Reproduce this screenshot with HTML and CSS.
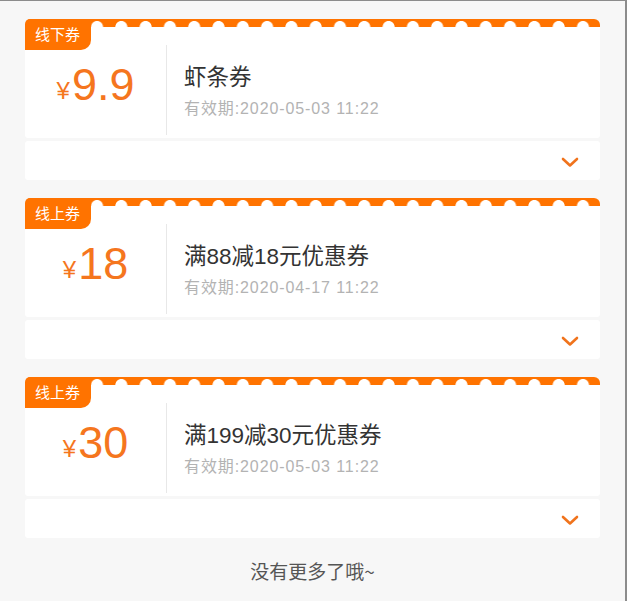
FILE: index.html
```html
<!DOCTYPE html>
<html lang="zh-CN">
<head>
    <meta charset="UTF-8">
    <meta name="viewport" content="width=device-width, initial-scale=1.0">
    <title>我的优惠券</title>
    <link rel="stylesheet" href="styles.css">
</head>
<body>
    <div class="page">
        <div class="coupon-list">
            <div class="coupon">
                <span class="coupon-tag">线下券</span>
                <div class="coupon-edge"></div>
                <div class="coupon-body">
                    <div class="coupon-price"><span class="yen">¥</span>9.9</div>
                    <div class="coupon-info">
                        <div class="coupon-title">虾条券</div>
                        <div class="coupon-date">有效期:2020-05-03 11:22</div>
                    </div>
                </div>
                <div class="coupon-foot">
                    <svg class="chevron" width="18" height="11" viewBox="0 0 18 11"><path d="M2 2 L9 8.5 L16 2" fill="none" stroke="#f0731c" stroke-width="2.6" stroke-linecap="round" stroke-linejoin="round"/></svg>
                </div>
            </div>

            <div class="coupon">
                <span class="coupon-tag">线上券</span>
                <div class="coupon-edge"></div>
                <div class="coupon-body">
                    <div class="coupon-price"><span class="yen">¥</span>18</div>
                    <div class="coupon-info">
                        <div class="coupon-title">满88减18元优惠券</div>
                        <div class="coupon-date">有效期:2020-04-17 11:22</div>
                    </div>
                </div>
                <div class="coupon-foot">
                    <svg class="chevron" width="18" height="11" viewBox="0 0 18 11"><path d="M2 2 L9 8.5 L16 2" fill="none" stroke="#f0731c" stroke-width="2.6" stroke-linecap="round" stroke-linejoin="round"/></svg>
                </div>
            </div>

            <div class="coupon">
                <span class="coupon-tag">线上券</span>
                <div class="coupon-edge"></div>
                <div class="coupon-body">
                    <div class="coupon-price"><span class="yen">¥</span>30</div>
                    <div class="coupon-info">
                        <div class="coupon-title">满199减30元优惠券</div>
                        <div class="coupon-date">有效期:2020-05-03 11:22</div>
                    </div>
                </div>
                <div class="coupon-foot">
                    <svg class="chevron" width="18" height="11" viewBox="0 0 18 11"><path d="M2 2 L9 8.5 L16 2" fill="none" stroke="#f0731c" stroke-width="2.6" stroke-linecap="round" stroke-linejoin="round"/></svg>
                </div>
            </div>
        </div>

        <p class="no-more">没有更多了哦~</p>
    </div>
</body>
</html>
```

FILE: styles.css
```css
html, body {
    margin: 0;
    padding: 0;
    height: 100%;
}

body {
    font-family: "Liberation Sans", Arial, "Noto Sans CJK SC", sans-serif;
    color: #333;
    background-color: #f7f7f7;
    overflow: hidden;
}

.page {
    box-sizing: border-box;
    height: 601px;
    border-top: 1px solid #8c8c8c;
    border-right: 2px solid #8c8c8c;
}

.coupon-list {
    display: flex;
    flex-direction: column;
    gap: 18px;
    padding: 18px 25px 0 25px;
}

.coupon {
    position: relative;
    display: flex;
    flex-direction: column;
}

/* orange scalloped top edge */
.coupon-edge {
    height: 8px;
    border-radius: 6px 6px 0 0;
    background-color: #ff7300;
    background-image: radial-gradient(circle at 50% 100%, #fff 5.6px, rgba(255, 255, 255, 0) 6.4px);
    background-size: 24.3px 8px;
    background-position: -13px 0;
    background-repeat: repeat-x;
}

.coupon-tag {
    position: absolute;
    top: 0;
    left: 0;
    height: 31px;
    padding: 0 11px 0 10px;
    line-height: 30px;
    font-size: 15px;
    color: #fff;
    background-color: #ff7300;
    border-radius: 5px 0 10px 0;
    font-family: "Noto Sans CJK SC", sans-serif;
}

.coupon-body {
    display: flex;
    height: 111px;
    box-sizing: border-box;
    padding: 18px 0 3px;
    background-color: #fff;
    border-radius: 0 0 3px 3px;
}

.coupon-price {
    width: 141px;
    display: flex;
    align-items: center;
    justify-content: center;
    padding-bottom: 12px;
    box-sizing: border-box;
    font-size: 45px;
    line-height: 45px;
    color: #f5761e;
}

.coupon-price .yen {
    font-size: 24px;
    align-self: center;
    margin-top: 12px;
    margin-right: 2px;
}

.coupon-info {
    flex: 1;
    display: flex;
    flex-direction: column;
    justify-content: center;
    padding: 3px 0 0 17px;
    border-left: 1px solid #e8e8e8;
}

.coupon-title {
    font-size: 22.5px;
    line-height: 30px;
    color: #333;
}

.coupon-date {
    margin-top: 4px;
    font-size: 16px;
    line-height: 24px;
    color: #b3b3b3;
    letter-spacing: 0.9px;
}

.coupon-foot {
    display: flex;
    align-items: center;
    justify-content: flex-end;
    height: 39px;
    margin-top: 3px;
    padding-right: 21px;
    background-color: #fff;
    border-radius: 3px;
}

.chevron {
    margin-top: 3px;
}

.no-more {
    margin: 20px 0 0;
    text-align: center;
    font-size: 19px;
    line-height: 26px;
    color: #555;
    font-family: "Noto Sans CJK SC", sans-serif;
}
```
